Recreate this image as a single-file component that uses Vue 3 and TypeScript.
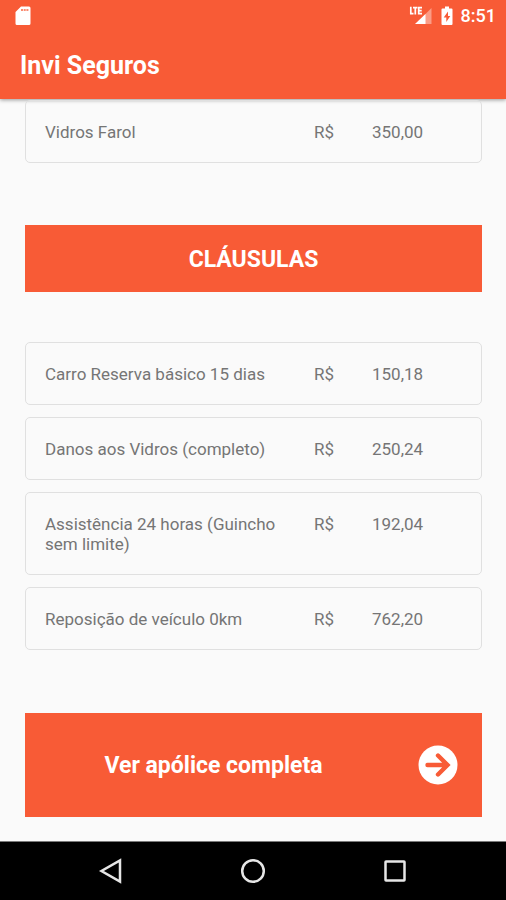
<script setup lang="ts">
interface Coverage {
  name: string
  amount: string
}

const coverages: Coverage[] = [{ name: 'Vidros Farol', amount: '350,00' }]

const clauses: Coverage[] = [
  { name: 'Carro Reserva básico 15 dias', amount: '150,18' },
  { name: 'Danos aos Vidros (completo)', amount: '250,24' },
  { name: 'Assistência 24 horas (Guincho sem limite)', amount: '192,04' },
  { name: 'Reposição de veículo 0km', amount: '762,20' },
]
</script>

<template>
  <div class="screen">
    <header class="app-bar">
      <div class="status">
        <svg class="sd" viewBox="0 0 16 20" aria-hidden="true">
          <path
            fill="#fff"
            d="M6 0.500h8a1.500 1.500 0 0 1 1.500 1.500v15.500a1.500 1.500 0 0 1-1.500 1.500H2a1.500 1.500 0 0 1-1.500-1.500V6z"
          />
          <path fill="#f85b36" fill-opacity="0.7" d="M6 3h2v2H6zM8.700 3h2v2h-2zM11.400 3h2v2h-2z" />
        </svg>
        <div class="indicators">
          <svg class="signal" viewBox="0 0 24 20" aria-hidden="true">
            <path fill="#fff" fill-opacity="0.4" d="M22.500 2v16H6.500z" />
            <path fill="#f85b36" d="M0 0h13.500v9.500H0z" />
            <path fill="#fff" d="M16.500 8V18H6z" />
            <path
              fill="none"
              stroke="#fff"
              stroke-width="1.700"
              d="M1.800 0.800v6.800h2.700M4 1.600h4.400M6.300 1.600V8.400M13 1.600H9.700v6H13M9.700 4.600h3"
            />
          </svg>
          <svg class="battery" viewBox="0 0 12 20" aria-hidden="true">
            <path
              fill="#fff"
              fill-rule="evenodd"
              d="M4 0.500h4v2h2.500a1 1 0 0 1 1 1V18a1 1 0 0 1-1 1h-9a1 1 0 0 1-1-1V3.500a1 1 0 0 1 1-1H4zM7 5.500 2.700 11.500H5.300V16L9.300 10H7z"
            />
          </svg>
          <time class="clock">8:51</time>
        </div>
      </div>
      <h1 class="title">Invi Seguros</h1>
    </header>

    <main class="content">
      <ul class="cards">
        <li v-for="item in coverages" :key="item.name" class="card">
          <span>{{ item.name }}</span>
          <span>R$</span>
          <span>{{ item.amount }}</span>
        </li>
      </ul>

      <h2 class="section">CLÁUSULAS</h2>

      <ul class="cards">
        <li v-for="item in clauses" :key="item.name" class="card">
          <span>{{ item.name }}</span>
          <span>R$</span>
          <span>{{ item.amount }}</span>
        </li>
      </ul>

      <button class="policy" type="button">
        <span class="policy-label">Ver apólice completa</span>
        <svg class="arrow" viewBox="0 0 40 40" aria-hidden="true">
          <circle cx="20" cy="20" r="19.500" fill="#fff" />
          <path
            fill="none"
            stroke="#f85b36"
            stroke-width="4.400"
            stroke-linecap="round"
            d="M9.500 20H29M20 10.500 29.500 20l-9.500 9.500"
          />
        </svg>
      </button>
    </main>

    <nav class="nav" aria-label="Sistema">
      <button class="nav-button" type="button" aria-label="Voltar">
        <svg viewBox="0 0 26 26" aria-hidden="true">
          <path d="M22 2.500v21L3.500 13z" />
        </svg>
      </button>
      <button class="nav-button" type="button" aria-label="Início">
        <svg viewBox="0 0 26 26" aria-hidden="true">
          <circle cx="13" cy="13" r="10.800" />
        </svg>
      </button>
      <button class="nav-button" type="button" aria-label="Recentes">
        <svg viewBox="0 0 26 26" aria-hidden="true">
          <rect x="3.500" y="3.500" width="19" height="19" rx="0.500" />
        </svg>
      </button>
    </nav>
  </div>
</template>

<style>
body {
  margin: 0;
  background: #fafafa;
}
</style>

<style scoped>
.screen {
  display: flex;
  flex-direction: column;
  min-height: 100vh;
  background: #fafafa;
  color: #757575;
  font-family: Roboto, 'Liberation Sans', sans-serif;
}

.app-bar {
  background: #f85b36;
  color: #fff;
  box-shadow: 0 1px 4px rgba(0, 0, 0, 0.4);
}

.status {
  display: flex;
  align-items: center;
  justify-content: space-between;
  height: 32px;
  padding: 0 10px 0 15px;
}

.sd {
  width: 16px;
  height: 20px;
}

.indicators {
  display: flex;
  align-items: center;
  gap: 8px;
}

.signal {
  width: 24px;
  height: 20px;
}

.battery {
  width: 12px;
  height: 20px;
}

.clock {
  font-size: 18px;
  font-weight: 500;
  line-height: 20px;
}

.title {
  margin: 0;
  padding: 22px 20px 21px;
  font-size: 25px;
  font-weight: 700;
  line-height: 24px;
}

.content {
  flex: 1;
  padding: 1px 24px 24px 25px;
}

.cards {
  display: flex;
  flex-direction: column;
  gap: 12px;
  margin: 0;
  padding: 0;
  list-style: none;
}

.card {
  display: grid;
  grid-template-columns: 240fr 29fr 90fr;
  column-gap: 29px;
  padding: 21px 19px 20px;
  border: 1px solid #e0e0e0;
  border-radius: 5px;
  font-size: 17px;
  line-height: 20px;
}

.section {
  margin: 62px 0 50px;
  padding: 23px 0 20px;
  background: #f85b36;
  color: #fff;
  font-size: 23px;
  font-weight: 700;
  line-height: 24px;
  text-align: center;
}

.policy {
  display: flex;
  align-items: center;
  gap: 16px;
  width: 100%;
  margin: 63px 0 0;
  padding: 32px 24px 32px 0;
  border: 0;
  background: #f85b36;
  color: #fff;
  font-family: inherit;
  font-size: 23px;
  font-weight: 700;
  line-height: 24px;
}

.policy-label {
  flex: 1;
  padding-top: 2px;
}

.arrow {
  width: 40px;
  height: 40px;
}

.nav {
  display: flex;
  justify-content: center;
  gap: 16px;
  padding: 16px 0;
  border-top: 1px solid #7a7a7a;
  background: #000;
}

.nav-button {
  display: flex;
  justify-content: center;
  width: 126px;
  padding: 0;
  border: 0;
  background: none;
}

.nav-button svg {
  width: 26px;
  height: 26px;
  fill: none;
  stroke: #e6e6e6;
  stroke-width: 2.500;
}
</style>
